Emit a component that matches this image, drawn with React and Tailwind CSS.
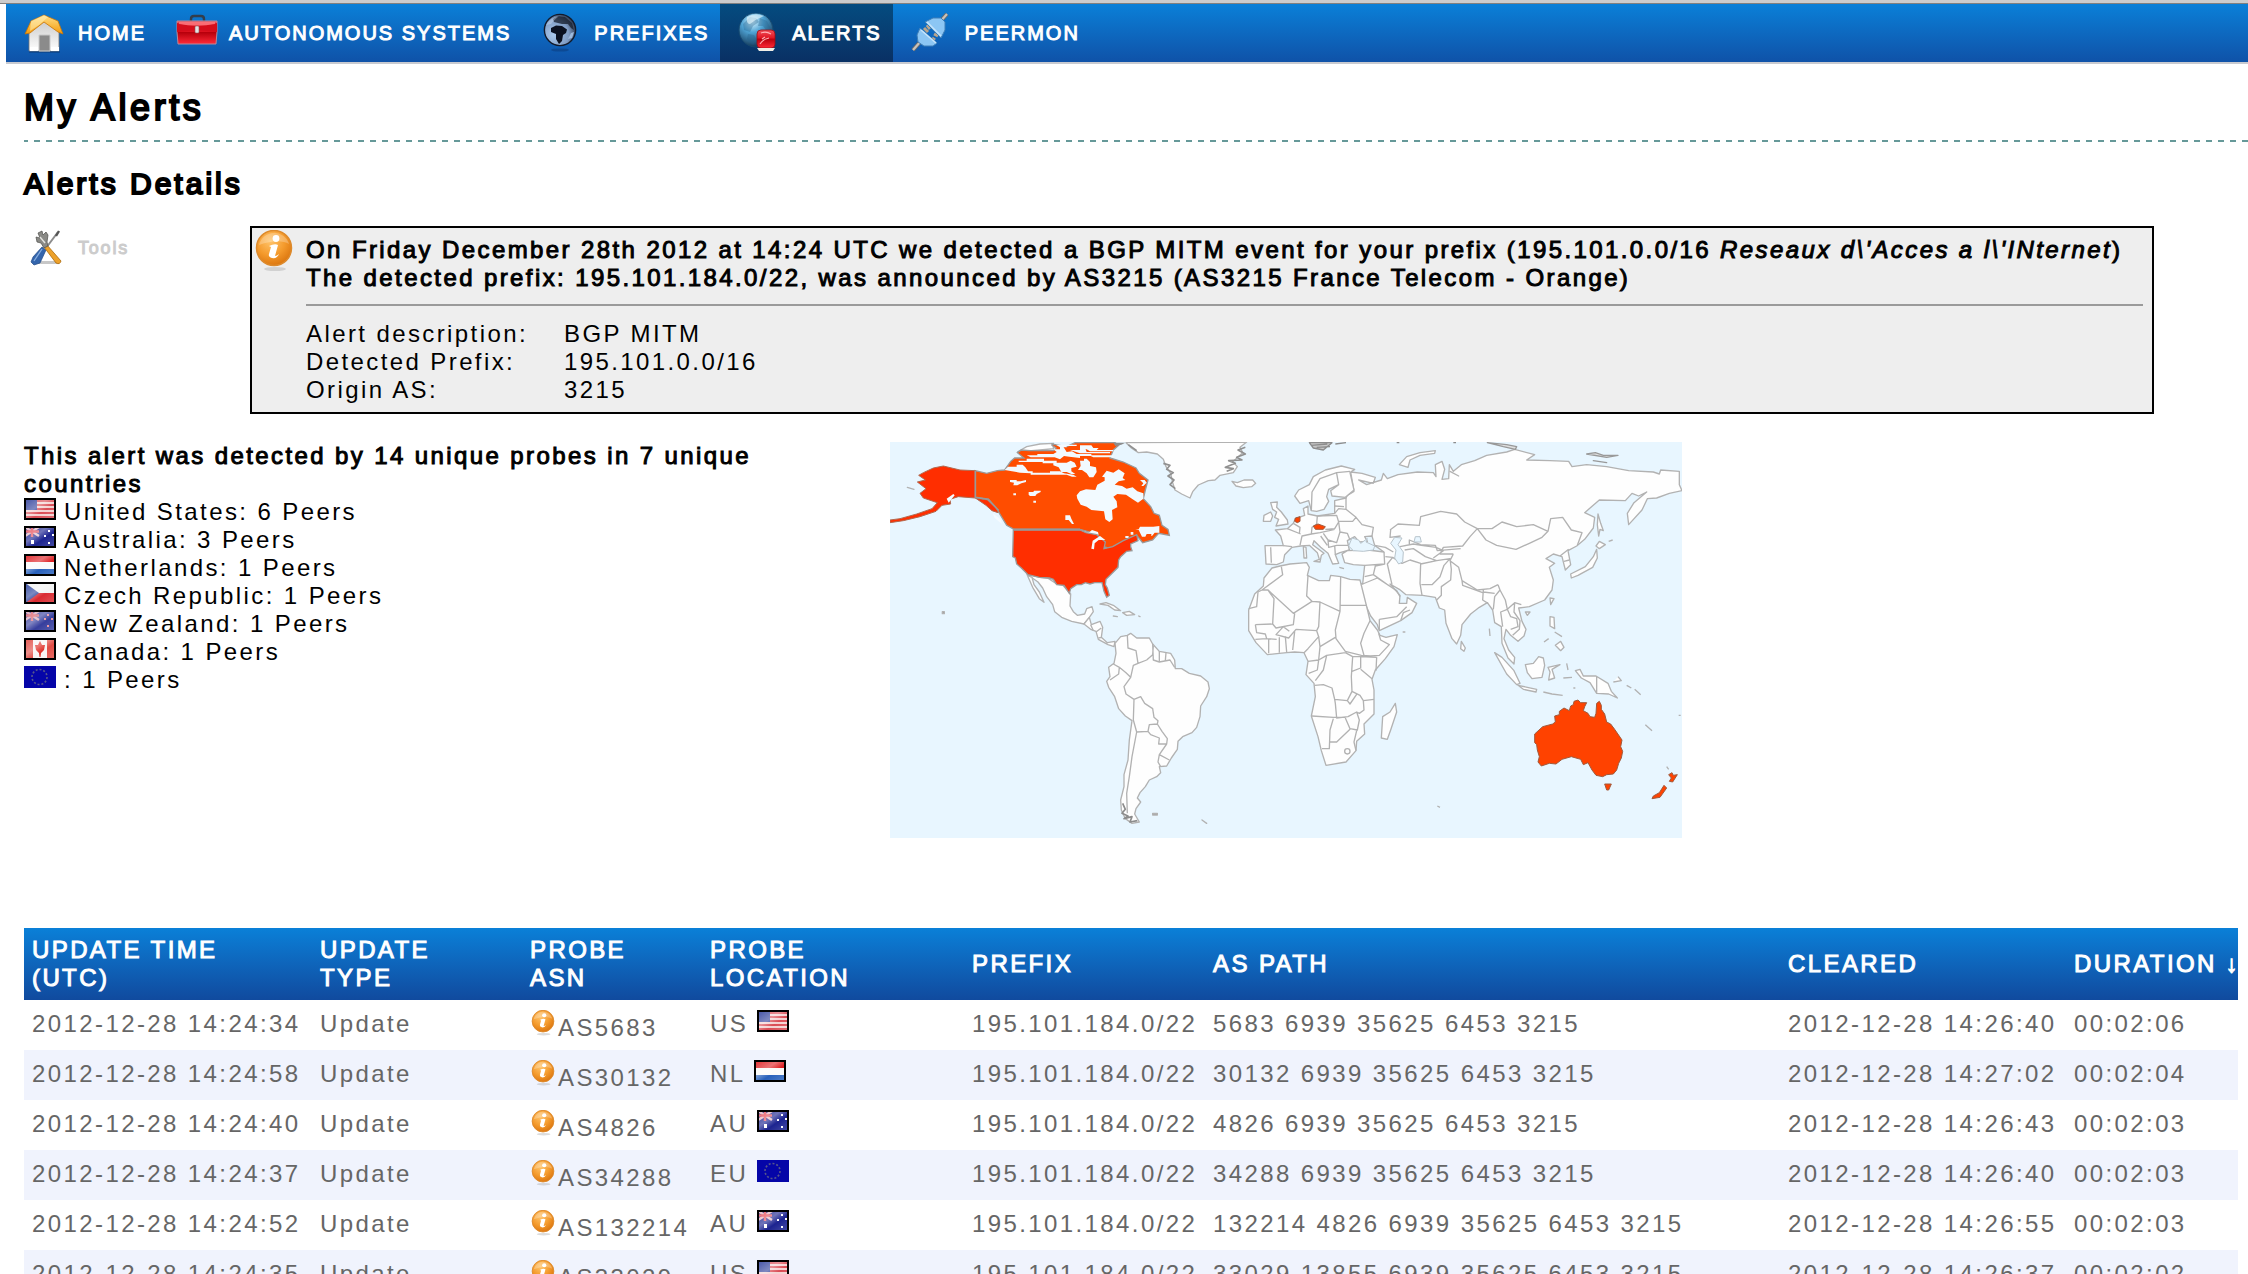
import React from "react";

function Defs() {
  return (
    <svg className="absolute h-0 w-0" aria-hidden="true">
      <defs>
        <radialGradient id="orange" cx="0.4" cy="0.3" r="0.75">
          <stop offset="0" stopColor="#ffc46b" />
          <stop offset="0.55" stopColor="#f49a2c" />
          <stop offset="1" stopColor="#d9720c" />
        </radialGradient>
        <linearGradient id="roof" x1="0" y1="0" x2="0" y2="1">
          <stop offset="0" stopColor="#ffe08a" />
          <stop offset="1" stopColor="#f59a08" />
        </linearGradient>
        <linearGradient id="wall" x1="0" y1="0" x2="0" y2="1">
          <stop offset="0" stopColor="#c9c9c9" />
          <stop offset="1" stopColor="#ffffff" />
        </linearGradient>
        <linearGradient id="red" x1="0" y1="0" x2="0" y2="1">
          <stop offset="0" stopColor="#f0505a" />
          <stop offset="0.45" stopColor="#e01522" />
          <stop offset="0.5" stopColor="#b8000c" />
          <stop offset="1" stopColor="#ff2a38" />
        </linearGradient>
        <radialGradient id="darkGlobe" cx="0.3" cy="0.65" r="0.8">
          <stop offset="0" stopColor="#a9c8ec" />
          <stop offset="0.6" stopColor="#7f9cc4" />
          <stop offset="1" stopColor="#1c2436" />
        </radialGradient>
        <radialGradient id="blueGlobe" cx="0.4" cy="0.25" r="0.8">
          <stop offset="0" stopColor="#d8f4ff" />
          <stop offset="0.4" stopColor="#4fa3d4" />
          <stop offset="1" stopColor="#0e2f4e" />
        </radialGradient>
        <linearGradient id="gloss" x1="0" y1="0" x2="1" y2="1">
          <stop offset="0" stopColor="#fff" stopOpacity="0.1" />
          <stop offset="0.4" stopColor="#fff" stopOpacity="0.4" />
          <stop offset="0.6" stopColor="#fff" stopOpacity="0.05" />
          <stop offset="1" stopColor="#fff" stopOpacity="0.25" />
        </linearGradient>
      </defs>
    </svg>
  );
}

const iconClass = "block h-10 w-10 shrink-0";

function HomeIcon() {
  return (
    <svg className={iconClass} viewBox="0 0 40 40" aria-hidden="true">
      <path d="M5 38h31v2H5z" fill="#0b3f80" opacity=".6" />
      <path d="M5 17l16-10 14 10v21H5z" fill="url(#wall)" stroke="#777" strokeWidth=".8" />
      <path d="M15 22h11v16H15z" fill="#8b8b8b" stroke="#c9c9c9" />
      <path d="M6 34h8v4H6zM27 34h8v4h-8z" fill="#fff" />
      <path d="M1 21l6-13L20 2l14 6 5 13-5-2L20 9 6 20z" fill="url(#roof)" stroke="#c87404" strokeWidth=".8" />
      <path d="M7 8l13-6 4 2-9 8-9 6z" fill="#fff0b8" opacity=".55" />
    </svg>
  );
}

function CaseIcon() {
  return (
    <svg className="block h-10 w-11 shrink-0" viewBox="0 0 44 40" aria-hidden="true">
      <path d="M16 9V6q0-3 3-3h7q3 0 3 3v3" fill="none" stroke="#333e4c" strokeWidth="2.4" />
      <path d="M2 8h40v11l-1 12H3L2 19z" fill="url(#red)" stroke="#b58b9c" />
      <path d="M2 10q20 6 40 0v9q-20-3-40 0z" fill="#d40d1b" />
      <path d="M4 9h36v2q-18 3-36 0z" fill="#ff8088" opacity=".7" />
      <rect x="20" y="13" width="4" height="7" rx="1" fill="#e3e3e3" stroke="#8d5058" strokeWidth=".6" />
    </svg>
  );
}

function GlobeIcon() {
  return (
    <svg className={iconClass} viewBox="0 0 40 40" aria-hidden="true">
      <ellipse cx="20" cy="37" rx="9" ry="1.600" fill="#0a2f66" opacity=".4" />
      <circle cx="20" cy="17" r="15.600" fill="url(#darkGlobe)" stroke="#121a2b" strokeWidth="1.400" />
      <path d="M11 15l5-2.500 6 .5 5 3.500-1 3.500-3 2-1 6-3 3-3-5v-5l-5-2z" fill="#0b1120" />
      <path d="M13 6l5-3 7 1 7 6 2 7-3-2-3-4-6 0-4-1-4-1z" fill="#161d2c" opacity=".75" />
      <path d="M6 12q5-8 13-9-5 4-8 8z" fill="#dce8f8" opacity=".35" />
      <path d="M28 26l3-6 3-1-2 6z" fill="#9db9dc" />
    </svg>
  );
}

function AlertGlobeIcon() {
  return (
    <svg className={iconClass} viewBox="0 0 40 40" aria-hidden="true">
      <circle cx="18" cy="17" r="17" fill="url(#blueGlobe)" stroke="#174a70" />
      <path d="M5 11l7-7 6 1 3 4-6 4-3 6-6-2zM22 5l7 3 4 8-5 1-3-4-5 0zM10 21l6 1 3 5-4 5-6-6z" fill="#245f86" opacity=".35" />
      <path d="M9 4q8-5 17-1-8 3-14 8-4 0-3-7z" fill="#eafaff" opacity=".6" />
      <rect x="19" y="17" width="18" height="18" rx="4" fill="url(#red)" stroke="#9a0d15" strokeWidth=".8" />
      <path d="M23 20q5-2 10 1M22 31q3-5 9-6M24 26l3-2" fill="none" stroke="#ffb0b4" strokeWidth="1.200" />
      <path d="M19 35h18l-2 3H21z" fill="#f0eee6" />
    </svg>
  );
}

function PlugIcon() {
  return (
    <svg className={iconClass} viewBox="0 0 40 40" aria-hidden="true">
      <path d="M2 37l8-9M28 10l8-9" stroke="#6b6b6b" strokeWidth="4" />
      <path d="M2 37l8-9M28 10l8-9" stroke="#c9c3bb" strokeWidth="2.2" />
      <path d="M13 15l4 4M16 12l3 4M21 25l3 2M23 21l4 2" stroke="#b9a58c" strokeWidth="3" />
      <path d="M9 15l17 15-4 3-9 0-6-4-1-7z" fill="#8cc6f4" stroke="#3f7fb8" />
      <path d="M14 9l8-4h8l4 4v8l-4 8z" fill="#8cc6f4" stroke="#3f7fb8" />
      <path d="M10 17l15 13M16 9l14 14" stroke="#c5e4fb" strokeWidth="1.6" />
    </svg>
  );
}

function ToolsIcon() {
  return (
    <svg className="block h-9 w-9 shrink-0" viewBox="0 0 36 36" aria-hidden="true">
      <path d="M8 31h22v3H6z" fill="#999" opacity=".55" />
      <path d="M29 2L17 18" stroke="#8c8c8c" strokeWidth="2" />
      <path d="M30 1l-3 5" stroke="#555" strokeWidth="2.4" />
      <path d="M13 17l4 3-6 13-6 2-3-3 2-5z" fill="#3465ac" stroke="#234a86" strokeWidth=".7" />
      <path d="M5 31l8-12" stroke="#87aee0" strokeWidth="1.3" />
      <path d="M18 15l14 16q-1 4-5 2L15 17z" fill="#eda12a" stroke="#a96a0d" strokeWidth=".8" />
      <path d="M9 3l4-2 1 4 3-3 2 3-1 7 1 4-4 2-3-5-4-1-1-5 4 1z" fill="#8a8a86" stroke="#4d4d4b" strokeWidth=".7" />
      <path d="M11 7l5 6" stroke="#e4e4e0" strokeWidth="1.4" />
    </svg>
  );
}

function InfoIcon({ className }) {
  return (
    <svg className={className} viewBox="0 2 40 42" aria-hidden="true">
      <ellipse cx="21" cy="41" rx="11" ry="2" fill="#9a9a9a" opacity=".35" />
      <circle cx="20" cy="20" r="17.500" fill="url(#orange)" stroke="#dd8a2c" strokeWidth="1.500" />
      <path d="M5 17a15.500 15.500 0 0 1 30-1q-10-6-30 1z" fill="#fff" opacity=".25" />
      <circle cx="22" cy="10.500" r="3.400" fill="#fff" />
      <path d="M15 18q6-3 9-1l-3 11q2 0 4-2-2 5-7 4-4-1-3-4l2-7z" fill="#fff" />
    </svg>
  );
}

const flagArt = {
  US: (
    <>
      <path d="M0 0h32v22H0z" fill="#f3cfcf" />
      <path d="M0 3h32M0 7h32M0 11h32M0 15h32M0 19h32" stroke="#d8434c" strokeWidth="2" />
      <path d="M0 0h13v12H0z" fill="#2a3a98" />
    </>
  ),
  AU: (
    <>
      <path d="M0 0h32v22H0z" fill="#10188a" />
      <path d="M1 1l14 9M15 1L1 10" stroke="#e6b9c4" strokeWidth="2.500" />
      <path d="M8 0v11M1 5.500h14" stroke="#e8505a" strokeWidth="2.500" />
      <path d="M7 14h3v4H7zM20 9h2v2h-2zM24 4h2v2h-2zM28 8h2v2h-2zM24 16h2v2h-2z" fill="#fff" />
    </>
  ),
  NL: (
    <>
      <path d="M0 0h32v8H0z" fill="#dd1418" />
      <path d="M0 8h32v7H0z" fill="#fafafa" />
      <path d="M0 15h32v7H0z" fill="#1c58b8" />
    </>
  ),
  CZ: (
    <>
      <path d="M0 0h32v11H0z" fill="#f2f2f2" />
      <path d="M0 11h32v11H0z" fill="#d81f26" />
      <path d="M0 0l15 11L0 22z" fill="#233c98" />
    </>
  ),
  NZ: (
    <>
      <path d="M0 0h32v22H0z" fill="#2c3498" />
      <path d="M1 1l14 9M15 1L1 10" stroke="#d9a5b8" strokeWidth="2.500" />
      <path d="M8 0v11M1 5.500h14" stroke="#de606c" strokeWidth="2.500" />
      <path d="M23 4h2v2h-2zM20 8h2v2h-2zM27 8h2v2h-2zM23 15h2v2h-2z" fill="#e88a96" />
    </>
  ),
  CA: (
    <>
      <path d="M0 0h32v22H0z" fill="#f8f4f4" />
      <path d="M0 0h9v22H0zM23 0h9v22h-9z" fill="#e0443c" />
      <path d="M16 3l2 4 3 0-1 5-3 3-.5 4-1 0-.5-4-3-3-1-5 3 0z" fill="#dd2018" />
    </>
  ),
  EU: (
    <>
      <path d="M0 0h32v22H0z" fill="#0505a8" />
      <circle cx="15.500" cy="11" r="7.500" fill="none" stroke="#56568c" strokeWidth="1.600" strokeDasharray="2 1.900" />
    </>
  ),
};

function Flag({ code }) {
  return (
    <svg className="inline-block h-[22px] w-8 align-baseline" viewBox="0 0 32 22" role="img" aria-label={code + " flag"}>
      {flagArt[code]}
      {code !== "EU" && (
        <>
          <path d="M0 0h32v22H0z" fill="url(#gloss)" />
          <path d="M1 1h30v20H1z" fill="none" stroke="#000" strokeWidth="2" />
        </>
      )}
    </svg>
  );
}

const nav = [
  { label: "HOME", Icon: HomeIcon },
  { label: "AUTONOMOUS SYSTEMS", Icon: CaseIcon },
  { label: "PREFIXES", Icon: GlobeIcon },
  { label: "ALERTS", Icon: AlertGlobeIcon, active: true },
  { label: "PEERMON", Icon: PlugIcon },
];

const peers = [
  ["US", "United States: 6 Peers"],
  ["AU", "Australia: 3 Peers"],
  ["NL", "Netherlands: 1 Peers"],
  ["CZ", "Czech Republic: 1 Peers"],
  ["NZ", "New Zealand: 1 Peers"],
  ["CA", "Canada: 1 Peers"],
  ["EU", ": 1 Peers"],
];

const rows = [
  ["2012-12-28 14:24:34", "AS5683", "US", "5683 6939 35625 6453 3215", "2012-12-28 14:26:40", "00:02:06"],
  ["2012-12-28 14:24:58", "AS30132", "NL", "30132 6939 35625 6453 3215", "2012-12-28 14:27:02", "00:02:04"],
  ["2012-12-28 14:24:40", "AS4826", "AU", "4826 6939 35625 6453 3215", "2012-12-28 14:26:43", "00:02:03"],
  ["2012-12-28 14:24:37", "AS34288", "EU", "34288 6939 35625 6453 3215", "2012-12-28 14:26:40", "00:02:03"],
  ["2012-12-28 14:24:52", "AS132214", "AU", "132214 4826 6939 35625 6453 3215", "2012-12-28 14:26:55", "00:02:03"],
  ["2012-12-28 14:24:35", "AS33029", "US", "33029 13855 6939 35625 6453 3215", "2012-12-28 14:26:37", "00:02:02"],
];

function WorldMap() {
  return (
    <svg
      className="block h-auto w-[792px] bg-[#e8f6ff]"
      viewBox="30 36 2376 1188"
      role="img"
      aria-label="World map of the countries whose probes saw the alert"
    >
      <g fill="#fefefe" stroke="#b2b2b2" strokeWidth="4" strokeLinejoin="round">
        {/* Greenland and Iceland */}
        <path d="M738 38L752 52L775 68L800 66L832 72L850 88L858 110L872 130L878 158L885 180L905 192L930 204L938 185L955 165L985 152L1005 150L1020 136L1060 128L1072 110L1058 95L1075 80L1088 68L1080 52L1100 36z" />
        <path
          d="M850 100L870 106L860 118L880 128L864 138L882 150L870 164L886 176M1096 52L1074 60L1096 72L1070 82L1086 90L1046 92L1066 100L1036 112L1060 116L1040 124M745 44L770 62"
          fill="none"
          stroke="#909090"
          strokeWidth="5"
        />
        <path d="M1056 154L1072 158L1092 150L1118 150L1127 160L1115 170L1090 173L1068 168z" />
        {/* Mexico and Central America */}
        <path d="M440 432L480 442L505 445L530 462L548 465L572 492L570 528L580 545L592 556L614 552L620 536L636 530L640 545L628 562L612 582L575 574L545 562L524 545L518 524L500 500L488 474L474 456z" />
        <path d="M442 436L456 442L462 464L478 486L492 517L478 506L458 472z" />
        <path d="M612 582L628 562L634 584L660 574L668 592L664 622L682 638L705 634L702 650L684 644L655 628L648 604L632 598z" />
        <path d="M632 584L640 602M648 606L664 594M655 624L666 622" fill="none" />
        <path d="M660 522L678 518L700 526L722 542L704 540L684 526zM728 548L748 544L764 554L740 556zM700 558l12 2zM776 558l4 2z" />
        {/* South America */}
        <path d="M705 640L722 620L742 616L752 610L770 624L808 624L818 642L838 664L872 670L884 690L886 716L905 716L928 730L962 738L984 756L988 776L980 800L962 828L960 860L950 892L936 908L908 920L894 934L892 958L874 984L860 1008L838 1010L842 1028L830 1040L808 1050L796 1070L780 1088L772 1104L782 1116L768 1136L764 1152L778 1176L756 1180L736 1166L724 1140L722 1110L732 1070L732 1034L744 990L748 930L756 872L736 858L716 836L704 800L686 772L680 754L690 740L686 712L702 700L708 670z" />
        <path
          fill="none"
          d="M742 616L744 654L768 662L774 700L760 706L752 742L738 728L718 712L700 702M774 700L800 690L818 674L820 648M818 642L820 690L838 696L870 690L884 712M838 664L838 696M858 668L856 692M718 712L716 732L690 750M752 742L732 770L738 792L762 808L782 800L794 820L818 836L822 862L834 872L832 882L808 884L804 904L770 906M762 808L760 870L770 906L756 980L748 1040L740 1090L742 1150M832 882L846 904L862 926L860 942L836 942L838 924L812 914L804 904M860 942L838 974L834 996L842 1010M838 974L868 990"
        />
        <path d="M728 1120L736 1138L726 1150L744 1158L732 1166L756 1160L750 1176L772 1172" fill="none" stroke="#8c8c8c" strokeWidth="5" />
        <path d="M818 1150h14v5h-14zM966 1170l14 10zM187 545h6v6h-6zM82 172l20 6z" fill="#999" />
      </g>

      {/* Canada */}
      <path d="M412 66L440 50L480 42L520 40V56L480 60z" fill="#fefefe" stroke="#b2b2b2" strokeWidth="4" />
      <path
        d="M286 122L320 130L352 122L374 120L392 94L404 84H432L412 68L424 60L450 62L520 62L528 54L516 46V42L560 50L585 38L705 38L716 46L700 60L690 84L730 96L768 114L778 130L804 150L796 180L790 206L812 230L822 250L838 256L846 286L864 298L868 316L836 310L818 330L788 338L772 318L746 328L716 344L690 356L672 350L650 312L600 298L402 298L380 286L352 240L325 208L286 202z"
        fill="#ff4d00"
        stroke="#999"
        strokeWidth="4"
      />
      <path d="M700 38L736 38L724 44L706 48z" fill="#8c8c8c" />
      {/* Canadian lakes, straits and bays */}
      <g fill="#f2faff">
        <path d="M592 206L590 196L600 184L618 178L646 180L652 164L674 152V142L666 140L680 122L700 128L716 118L734 130L728 144L736 150L716 154L704 164L726 168L740 176L758 172L772 184L790 190V206L774 218L758 208L738 194L712 192L700 200L710 214L712 232L696 240L698 268L688 276L676 268L672 244L634 240L620 230L602 224z" />
        <path d="M374 120L384 110H410V104H428L436 112L444 124H458V128H510V124H540L552 130L580 134L590 140H576L560 134H452V130L420 128L396 124z" />
        <path d="M416 92H440V86H492V92H530V98H560L572 92L584 98L590 110L574 114V124L586 132H574L560 126H544L536 112L520 106V100H488V96H416z" />
        <path d="M440 76H472V72H520L530 66L520 58H540V50H550L560 66L576 64L590 72H634V76H700V82H640L632 78H600V84L568 80L552 78L540 88L524 82H480L452 82z" />
        <path d="M528 44H590V48H560V52H540zM600 46H634L640 54H656L650 60H700V64H630L620 58L600 56V50zM570 60H600V56H616L620 66H690V70H600z" />
        <path d="M600 92H612V86H620L630 96V108L648 112L650 126L640 142H628L620 130L606 120H594L602 108z" />
        <path d="M390 150H410V154H422L438 150V156L424 160L412 166H400L402 158L390 156zM446 186H460L462 182H482V186L470 192L466 198H450L446 194zM400 190h8v6h-8zM460 212h8v6h-8zM556 256H570L574 266L582 282H576L566 270H556z" />
        <path d="M610 306L626 308L636 300L654 306L656 314L634 312L620 316zM766 298H776L780 290H820L838 288L838 308L824 308L816 318H814V312H800L796 320H786L776 300zM780 150H794L800 158L790 168H784L790 160zM736 318h10v6h-10zM752 306h8v8h-8z" />
      </g>
      {/* United States */}
      <path
        d="M400 300L600 300L618 308L650 314L676 336L672 356L698 350L730 332L770 314L774 332L752 342V350L756 362L740 364L722 380L716 390L714 412L694 432L678 448L676 464L682 474L688 496L680 502L672 484L666 458L644 458L630 462L616 458L604 464L590 464L572 476L568 490L552 466L530 464L520 448L508 444L478 442L444 434L424 414L410 402L406 384L398 380z"
        fill="#ff2e00"
        stroke="#999"
        strokeWidth="4"
      />
      <path
        d="M286 122L240 120L190 108L160 114L130 128L116 136L136 150L112 156L138 176L120 190L130 204L172 218L156 236L110 252L60 266L30 270V278L70 272L120 260L168 244L186 226L212 222L210 208L235 200L286 204L318 226L336 242L354 248L350 236L322 210L286 204z"
        fill="#ff2e00"
        stroke="#b06a50"
        strokeWidth="3"
      />
      <path d="M286 122V202L325 208L356 242M402 298H600" fill="none" stroke="#999" strokeWidth="5" />
      <path d="M634 356L638 332L660 318L676 330L656 330L644 340L642 358zM338 250L362 268L366 282L344 264zM200 206L220 192L224 196L206 218z" fill="#f5fbff" />

      <g transform="translate(1080 0)">
        <g fill="#fefefe" stroke="#b2b2b2" strokeWidth="4" strokeLinejoin="round">
          {/* British Isles */}
          <path d="M92 218L112 216L110 232L124 246L142 270L144 282L108 288L116 268L104 262L110 246L98 238z" />
          <path d="M72 256L92 246L98 258L92 274L70 274z" />
          {/* Eurasian mainland */}
          <path d="M75 347L130 347L122 318L106 300L142 296L160 280L166 266L194 256L190 236L204 228L204 252L232 258L284 250L284 212L318 204L322 196L342 184L332 126L366 130L406 142L400 160L356 150L380 164L424 150L430 130L442 146L474 134L532 126L580 128L588 140L586 104L606 94L614 118L606 148L626 146L628 104L640 124L664 104L704 92L740 76L800 66L824 58L884 74L860 90L930 92L986 94L996 110L1040 104L1100 110L1166 122L1240 126L1258 132L1262 120L1318 124V164L1326 182L1288 190L1250 204L1222 206L1206 240L1166 284L1162 250L1182 218L1220 186L1196 198L1176 190L1156 212L1078 210L1034 248L1064 262L1060 294L1034 328L1010 348L984 362L992 404L976 420L966 380L940 372L918 386L944 400L928 412L940 450L936 480L914 510L868 530L836 534L846 574L858 598L852 618L834 634L812 616L798 598L792 626L806 660L824 682L822 702L804 684L786 640L784 590L764 578L758 540L742 518L718 532L692 552L666 584L662 616L650 642L636 626L618 580L614 540L598 534L586 502L548 496L498 494L478 478L450 462L480 496L478 520L500 520L502 502L530 520L516 548L482 572L418 602L412 584L392 558L374 518L354 460L368 462L374 406L340 404L314 398L306 372L322 362L384 360L432 366L404 346L396 318L374 320L382 334L358 336L344 320L322 332L328 360L300 368L286 374L296 400L278 402L264 370L242 352L222 332L218 344L252 370L244 376L240 396L222 394L238 388L232 368L208 346L182 348L156 352L134 374L130 396L110 404L78 402z" />
          {/* Scandinavia */}
          <path d="M214 242L206 212L180 220L164 198L176 180L208 164L220 140L256 120L304 108L344 118L330 128L342 180L316 202L276 198L272 182L296 164L290 130L296 164L266 178L260 200L266 214L252 238L230 244z" />
          <path d="M214 242L216 186L240 146L290 128L330 124" fill="none" />
          {/* Northern islands */}
          <path d="M478 104L500 80L540 68L586 62L584 70L540 76L510 90L504 112zM630 124L656 138z" />
          <path d="M1040 72L1066 68L1090 76L1134 76L1100 82zM1060 92L1100 98zM742 38L800 44L830 50L826 58L790 50z" fill="#e0e0e0" stroke="#999" />
          <path d="M208 38L276 38L250 60L220 54zM286 42L318 38M640 38h8M470 38h8M214 46L262 42M230 52L270 50" fill="#c8c8c8" stroke="#8c8c8c" />
          {/* Country lines across Eurasia */}
          <path
            fill="none"
            d="M232 258L230 282L216 292L214 312L186 318L180 346M142 296L182 312M160 280L180 292L178 312M232 258L290 256L296 276L284 296L256 298M284 250L296 236L318 238L348 262L338 274L296 274M318 204L318 240M284 228L312 230M296 276L300 306L322 310L330 330M348 262L366 284L400 292L396 318M214 312L240 308L268 302L284 298M250 310L264 330L290 338L300 306M264 330L266 352L290 346L324 346M242 318L262 346M284 346L286 374M130 347L156 350M92 352L94 398M404 346L436 352L460 366M432 366L434 402L374 406M436 380L458 382L442 402L456 464M434 402L406 408L400 434L374 440M400 434L440 462M368 462L412 444L470 482L480 500M418 568L470 560L500 530M418 568V600M482 572L490 548L510 540M458 382L486 400L510 390L542 400L540 460L546 496M494 360L520 356L556 380L590 392L542 402M480 350L520 342L544 346L588 352L610 362L580 384M450 300L474 282L538 286L542 260L602 244L650 252L674 276L712 296L690 320L668 348L610 352L600 372L640 372M452 300L450 322L482 318M508 342L508 330L542 344L586 346L592 362L662 356M590 392L630 386L612 406L600 440L576 464L544 464M630 386L634 418L632 450L604 470L604 496L590 510M640 372L630 392L656 412L666 452L712 480L750 476L774 464M666 452L668 466L728 488M730 480L728 510L744 520M730 486L764 490M774 464L780 480L764 500L760 538M780 480L796 510L802 538L782 546L788 590M802 538L824 518L844 524M802 538L812 560L830 566L834 590L812 598M824 518L822 546L840 572L838 598L818 616M712 296L756 296L786 276L830 290L880 284L924 304L906 322L868 340L828 358L770 346L738 330L712 296M924 304L932 266L968 262L994 300L1026 308L1012 346M960 378L986 358M972 394L988 390"
          />
          {/* Africa */}
          <path d="M96 414L120 408L150 402L200 398L208 412L202 436L236 452L268 452L272 436L302 440L330 448L360 450L372 498L384 546L390 572L412 600L420 616L438 622L472 614L462 650L436 686L406 720L396 748L402 780L402 852L372 882L374 912L350 934L348 962L318 996L258 1006L244 962L234 920L214 858L226 800L222 760L198 734L204 694L192 668L164 666L140 668L118 670L82 674L48 638L26 602L26 540L44 492L70 468L72 444z" />
          <path
            fill="none"
            d="M124 410L128 434L66 480L54 486L50 530L26 536M66 480H84L160 550L216 514L200 498L204 436M84 480L102 506L98 582L46 584M98 582L108 594L160 584L164 550M216 514L240 516L236 590L230 602L168 598L146 624L108 614L130 590L148 604M240 516L300 544L302 440M302 526H380M300 544L286 600L288 626L316 664L364 676L392 678L418 676L448 644L422 630L416 610M390 572L372 610L362 640L372 676M46 584L50 608L76 612L80 626L46 628M86 628V670M118 622V668M136 620L140 666M164 604L158 660M80 626L110 628M230 602L236 620L204 656L192 668M236 620L240 650L286 622M240 650L236 690L204 694M236 690L260 676L316 668L338 680L334 740L336 784L322 812L284 808L276 774L250 764L224 766M260 676L250 720L226 752M236 690L232 720L206 730M338 680H362L410 682M362 682L362 714L336 724M410 682L408 722M362 718L396 746M336 784L360 796L370 812L402 808M322 812L330 822L352 790M370 812L372 840L358 850L350 846L324 860L290 864L286 820L284 808M216 858L280 862L316 862M280 866L270 900L268 956L246 956M316 864L330 896L352 900L358 870L350 846M270 936L290 936L330 898M348 962L342 936L350 902"
          />
          <path d="M466 820L470 846L452 900L442 928L424 924L428 860L450 846z" />
          <circle cx="322" cy="964" r="8" />
          <path d="M488 606h8M190 350L198 352L200 384L192 384zM298 412L312 416" />
          {/* South-east Asia and Japan */}
          <path d="M664 634L676 654L672 664L662 656zM748 596L750 618M764 668L786 682L822 722L840 760L830 764L800 732zM834 766L862 772L890 778L888 786L850 778z" />
          <path d="M856 704L880 700L896 680L910 684L914 706L906 742L876 746L862 728zM924 712L960 704L936 718L944 744L926 750L930 726zM910 786L936 792L968 796M980 700L984 720M970 744L996 742M1000 774h6" />
          <path d="M1006 722L1020 718L1030 738L1068 738L1104 760L1114 784L1132 804L1106 792L1070 790L1050 758L1024 744zM1120 756L1144 752L1134 740M1160 766L1174 774M1184 778L1202 794M1070 740V790" />
          <path d="M930 560L942 562L944 596L930 588zM946 646L962 634L972 652L962 662zM912 636L926 626M944 606L966 620M930 504L942 506L932 524zM856 546L870 546L862 556z" />
          <path d="M1074 252L1082 280L1090 302L1080 298L1076 318L1072 284zM1068 348L1078 334L1096 344L1078 356zM1070 358L1072 384L1058 412L1014 436L994 444L992 432L1036 410L1060 380zM1106 334L1118 330" />
          <path d="M1216 884L1236 902M592 1128L600 1132M1316 856h6M1280 1010L1286 1018" />
        </g>
        {/* Inland seas */}
        <g fill="#e8f6ff" stroke="#b8c4cc" strokeWidth="3">
          <path d="M326 348L336 324L356 330L362 340L382 326L378 336L404 348L400 360L370 364L340 362z" />
          <path d="M452 340L464 322L486 324L474 344L490 366L488 396L476 402L464 384L468 360z" />
          <path d="M522 336L526 320L540 320L544 336z" />
        </g>
        {/* Netherlands, Czech Republic, Australia and New Zealand */}
        <g fill="#ff4200" stroke="#a05a3c" strokeWidth="3">
          <path d="M166 264L180 260L180 274L172 278L164 274z" />
          <path d="M220 288L234 282L256 290L250 298L226 298z" />
          <path d="M884 912L908 890L938 882L946 876L944 858L958 854L958 844L972 834L988 842L992 828L1000 824L1002 814L1014 810L1022 818L1040 818L1034 830L1030 842L1044 850L1050 860L1064 862L1068 850L1070 820L1078 814L1084 826V838L1094 852L1100 876L1112 882L1124 898L1146 930L1142 950L1148 964L1144 984L1136 1000L1130 1020L1120 1032L1100 1034L1088 1040L1068 1036L1056 1020L1044 998L1030 1004L1022 988L994 980L966 988L948 1002L928 1000L904 1008L894 996L898 980L892 960L890 944L884 938z" />
          <path d="M1094 1062L1114 1062L1106 1080L1100 1080z" />
          <path d="M1286 1034L1296 1028L1300 1036L1312 1034L1298 1056L1288 1054L1294 1044zM1272 1066L1280 1074L1260 1102L1236 1106L1240 1098L1258 1088z" />
        </g>
      </g>
    </svg>
  );
}

function Header({ children }) {
  return (
    <th scope="col" className="py-2 pl-2 align-middle font-normal [-webkit-text-stroke:1px_currentColor]">
      {children}
    </th>
  );
}

export default function App() {
  return (
    <div className="min-h-screen overflow-x-hidden bg-white font-['Liberation_Sans',Arial,sans-serif] text-2xl leading-7 tracking-widest text-black">
      <Defs />
      <div className="h-1 border-b border-[#808080] bg-[#cccccc]" />
      <nav className="ml-1.5 border-b-2 border-[#c8cad0] bg-linear-to-b from-[#0a80d8] to-[#0f52a8]">
        <ul className="flex h-[58px] text-xl tracking-widest text-white [-webkit-text-stroke:1px_currentColor]">
          {nav.map(({ label, Icon, active }) => (
            <li key={label} className={active ? "bg-linear-to-b from-[#044c80] to-[#093064]" : ""}>
              <a href="#" aria-current={active ? "page" : undefined} className="flex h-full items-center gap-3.5 pr-[11px] pl-[18px]">
                <span className="flex w-10">
                  <Icon />
                </span>
                {label}
              </a>
            </li>
          ))}
        </ul>
      </nav>

      <main className="pl-6">
        <h1 className="pt-6 pb-3 text-4xl leading-10 tracking-widest [-webkit-text-stroke:2px_currentColor]">My Alerts</h1>
        <div className="h-0.5 bg-[repeating-linear-gradient(90deg,#669999_0px,#669999_4px,transparent_4px,transparent_10px,#669999_10px,#669999_12px)]" />
        <h2 className="mt-[26px] text-3xl leading-8 tracking-widest [-webkit-text-stroke:2px_currentColor]">Alerts Details</h2>

        <div className="mt-[26px] mr-[94px] flex items-start">
          <a
            href="#"
            className="flex w-[226px] shrink-0 items-center gap-[13px] pt-1 pl-[5px] text-lg tracking-widest text-[#cccccc] [-webkit-text-stroke:1px_currentColor]"
          >
            <ToolsIcon />
            Tools
          </a>
          <section className="flex min-w-0 flex-1 gap-3 border-2 border-black bg-[#eeeeee] pr-[9px] pb-2 pl-0.5">
            <InfoIcon className="mt-0.5 block h-[42px] w-10 shrink-0" />
            <div className="min-w-0 flex-1 pt-2">
              <p className="whitespace-nowrap [-webkit-text-stroke:1px_currentColor]">
                On Friday December 28th 2012 at 14:24 UTC we detected a BGP MITM event for your prefix (195.101.0.0/16{" "}
                <em>Reseaux d\'Acces a l\'INternet</em>)<br />
                The detected prefix: 195.101.184.0/22, was announced by AS3215 (AS3215 France Telecom - Orange)
              </p>
              <hr className="mt-3 mb-3.5 border-t-2 border-[#9a9a9a]" />
              <dl className="grid grid-cols-[258px_1fr]">
                <dt>Alert description:</dt>
                <dd>BGP MITM</dd>
                <dt>Detected Prefix:</dt>
                <dd>195.101.0.0/16</dd>
                <dt>Origin AS:</dt>
                <dd>3215</dd>
              </dl>
            </div>
          </section>
        </div>

        <div className="mt-7 flex items-start">
          <section className="w-[866px] shrink-0 pr-20">
            <p className="[-webkit-text-stroke:1px_currentColor]">
              This alert was detected by 14 unique probes in 7 unique<br />countries
            </p>
            <ul>
              {peers.map(([code, text]) => (
                <li key={code} className="flex h-7 items-start gap-2">
                  <Flag code={code} />
                  <span>{text}</span>
                </li>
              ))}
            </ul>
          </section>
          <WorldMap />
        </div>

        <div className="mt-[90px] mr-2.5">
          <table className="w-full table-fixed border-collapse text-left">
            <colgroup>
              <col className="w-[288px]" />
              <col className="w-[210px]" />
              <col className="w-[180px]" />
              <col className="w-[262px]" />
              <col className="w-[241px]" />
              <col />
              <col className="w-[286px]" />
              <col className="w-[172px]" />
            </colgroup>
            <thead>
              <tr className="bg-linear-to-b from-[#0a80d8] to-[#104a9e] whitespace-nowrap text-white">
                <Header>UPDATE TIME<br />(UTC)</Header>
                <Header>UPDATE<br />TYPE</Header>
                <Header>PROBE<br />ASN</Header>
                <Header>PROBE<br />LOCATION</Header>
                <Header>PREFIX</Header>
                <Header>AS PATH</Header>
                <Header>CLEARED</Header>
                <Header>DURATION ↓</Header>
              </tr>
            </thead>
            <tbody className="whitespace-nowrap text-[#666666]">
              {rows.map(([time, asn, code, path, cleared, duration]) => (
                <tr key={asn} className="h-[50px] even:bg-[#f0f3fd] [&>td]:px-2 [&>td]:pt-2.5 [&>td]:pb-3 [&>td]:align-top [&>td]:leading-7">
                  <td>{time}</td>
                  <td>Update</td>
                  <td>
                    <span className="flex h-7 items-start gap-0.5">
                      <InfoIcon className="block h-[26px] w-[26px] shrink-0" />
                      <a href="#" className="pt-1">{asn}</a>
                    </span>
                  </td>
                  <td>{code} <Flag code={code} /></td>
                  <td>195.101.184.0/22</td>
                  <td>{path}</td>
                  <td>{cleared}</td>
                  <td>{duration}</td>
                </tr>
              ))}
            </tbody>
          </table>
        </div>
      </main>
    </div>
  );
}
